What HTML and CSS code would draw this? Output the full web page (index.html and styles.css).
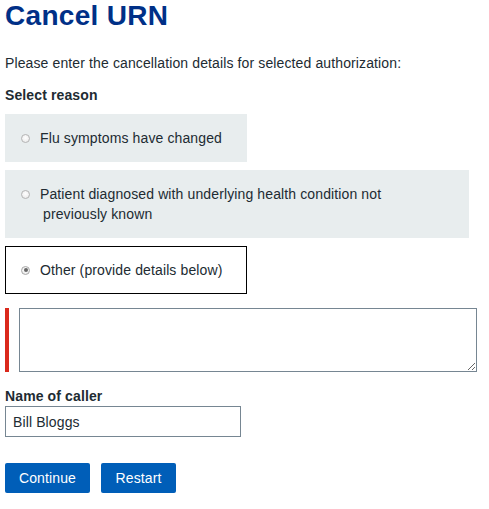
FILE: index.html
```html
<!DOCTYPE html>
<html lang="en">
<head>
<meta charset="utf-8">
<title>Cancel URN</title>
<link rel="stylesheet" href="styles.css">
</head>
<body>
<main class="page">
  <h1 class="title">Cancel URN</h1>
  <p class="intro">Please enter the cancellation details for selected authorization:</p>
  <div class="field-label">Select reason</div>
  <div class="options">
    <label class="option option-narrow">
      <span class="radio"></span>
      <span class="option-text">Flu symptoms have changed</span>
    </label>
    <label class="option option-wide">
      <span class="radio"></span>
      <span class="option-text">Patient diagnosed with underlying health condition not<br><span class="indent">previously known</span></span>
    </label>
    <label class="option option-narrow option-selected">
      <span class="radio radio-checked"></span>
      <span class="option-text">Other (provide details below)</span>
    </label>
  </div>
  <div class="details-row">
    <span class="error-bar"></span>
    <textarea class="details"></textarea>
  </div>
  <div class="field-label caller-label">Name of caller</div>
  <input class="text-input" type="text" value="Bill Bloggs">
  <div class="actions">
    <button class="btn btn-continue" type="button">Continue</button>
    <button class="btn btn-restart" type="button">Restart</button>
  </div>
</main>
</body>
</html>
```

FILE: styles.css
```css
* {
  box-sizing: border-box;
}

html, body {
  margin: 0;
  padding: 0;
  background: #ffffff;
}

body {
  font-family: "Liberation Sans", Arial, sans-serif;
  font-size: 14px;
  line-height: 20px;
  letter-spacing: 0.12px;
  color: #212b32;
}

.page {
  padding: 0 5px;
}

.title {
  margin: 0;
  font-size: 28px;
  line-height: 32px;
  letter-spacing: 0.3px;
  font-weight: bold;
  color: #003087;
}

.intro {
  margin: 21px 0 0;
}

.field-label {
  margin-top: 12px;
  font-weight: bold;
  color: #212b32;
}

.options {
  margin-top: 9px;
  display: flex;
  flex-direction: column;
  align-items: flex-start;
  gap: 8px;
}

.option {
  display: flex;
  align-items: center;
  padding: 13px 10px 13px 15px;
  background: #e8edee;
  border: 1px solid #e8edee;
}

.option-narrow {
  width: 242px;
}

.option-wide {
  width: 464px;
  align-items: flex-start;
}

.option-wide .radio {
  margin-top: 6px;
}

.option-selected {
  background: #ffffff;
  border-color: #000000;
}

.radio {
  flex: none;
  width: 9px;
  height: 9px;
  border-radius: 50%;
  border: 1px solid #b4b4b4;
  background: radial-gradient(circle at 50% 40%, #ffffff 0%, #e6e6e6 100%);
  margin-right: 10px;
  position: relative;
}

.radio-checked {
  border-color: #a8a8a8;
}

.radio-checked::after {
  content: "";
  position: absolute;
  left: 1.5px;
  top: 1.5px;
  width: 4px;
  height: 4px;
  border-radius: 50%;
  background: #666666;
}

.option-text {
  display: block;
}

.indent {
  padding-left: 3px;
}

.details-row {
  margin-top: 14px;
  display: flex;
  gap: 10px;
  height: 64px;
}

.error-bar {
  flex: none;
  width: 4px;
  background: #da291c;
}

.details {
  display: block;
  width: 458px;
  height: 64px;
  margin: 0;
  border: 1px solid #768692;
  border-radius: 0;
  font-family: inherit;
  font-size: 14px;
  padding: 4px 6px;
}

.caller-label {
  margin-top: 14px;
}

.text-input {
  display: block;
  width: 236px;
  height: 31px;
  margin: 0;
  padding: 0 7px;
  border: 1px solid #768692;
  border-radius: 0;
  font-family: inherit;
  font-size: 14px;
  letter-spacing: 0.12px;
  color: #212b32;
}

.actions {
  margin-top: 26px;
  display: flex;
  gap: 11px;
}

.btn {
  height: 30px;
  padding: 0;
  border: none;
  border-radius: 2px;
  background: #005eb8;
  color: #ffffff;
  font-family: inherit;
  font-size: 14px;
  letter-spacing: 0.12px;
  line-height: 30px;
  text-align: center;
}

.btn-continue {
  width: 85px;
}

.btn-restart {
  width: 75px;
}
```
